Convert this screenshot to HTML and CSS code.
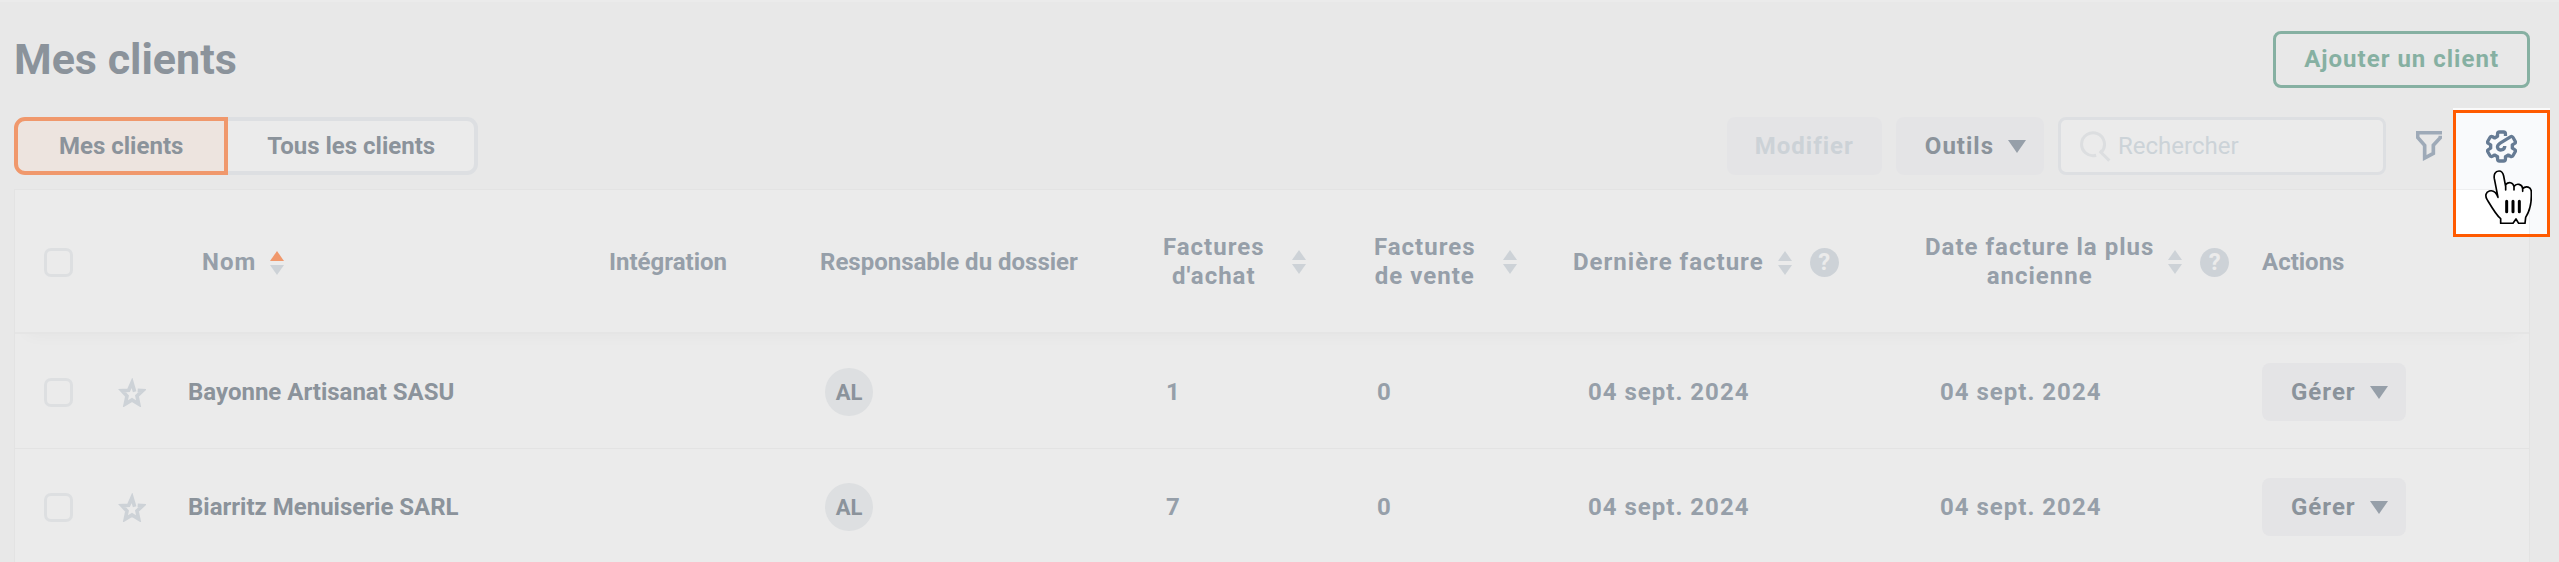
FILE: index.html
```html
<!DOCTYPE html>
<html lang="fr">
<head>
<meta charset="utf-8">
<title>Mes clients</title>
<link rel="stylesheet" href="styles.css">
</head>
<body>
<svg class="sprite" aria-hidden="true">
  <symbol id="sort" viewBox="0 0 14 24"><path class="sort-up" d="M7 0L14 10H0Z"/><path class="sort-down" d="M0 14H14L7 24Z"/></symbol>
  <symbol id="star" viewBox="0 0 84 87"><path d="M50 41L42 14L32 37L12 38L27 54L22 78L42 66L62 78L57 54L74 38L59 37" fill="none" stroke="currentColor" stroke-width="11"/></symbol>
  <symbol id="caret" viewBox="0 0 18 13"><path d="M0 0H18L9 13Z" fill="currentColor"/></symbol>
</svg>
<main class="page">
  <header class="page-header">
    <h1 class="title">Mes clients</h1>
    <button class="btn btn-outline" type="button">Ajouter un client</button>
  </header>

  <div class="toolbar">
    <div class="tabs">
      <button class="tab tab-active" type="button" aria-pressed="true">Mes clients</button>
      <button class="tab" type="button" aria-pressed="false">Tous les clients</button>
    </div>
    <div class="tools">
      <button class="btn" type="button" disabled>Modifier</button>
      <button class="btn btn-menu" type="button">Outils<svg class="caret"><use href="#caret"/></svg></button>
      <label class="search">
        <svg class="search-icon" viewBox="0 0 92 92" aria-hidden="true"><path d="M48 72A34 34 0 1 1 64 62L59 60L87 88" fill="none" stroke="currentColor" stroke-width="9"/></svg>
        <input class="search-input" type="text" placeholder="Rechercher" aria-label="Rechercher">
      </label>
      <button class="icon-btn" type="button" aria-label="Filtrer">
        <svg class="filter-icon" viewBox="0 0 78 90"><path d="M78 5H5V19L26 43V81L52 67V43L73 20V14" fill="none" stroke="currentColor" stroke-width="11"/></svg>
      </button>
      <div class="settings">
        <div class="spotlight"><div class="spotlight-card"></div></div>
        <button class="icon-btn icon-btn-strong" type="button" aria-label="Paramètres">
          <svg class="gear-icon" viewBox="0 0 94 99"><path d="M59 18V11.5Q59 5.5 53 5.5H41Q35 5.5 35 11.5V18.5L26.2 23.6L20.1 20.1Q14.9 17.1 11.9 22.3L5.9 32.7Q2.9 37.9 8.1 40.9L14.2 44.4V54.6L8.1 58.1Q2.9 61.1 5.9 66.3L11.9 76.7Q14.9 81.9 20.1 78.9L26.2 75.4L35 80.5V87.5Q35 93.5 41 93.5H53Q59 93.5 59 87.5V80.5L67.8 75.4L73.9 78.9Q79.1 81.9 82.1 76.7L88.1 66.3Q91.1 61.1 85.9 58.1L79.8 54.6V44.4L85.9 40.9Q91.1 37.9 88.1 32.7L82.1 22.3Q79.1 17.1 73.9 20.1L43 39C29 48 35 61 47 60Q57 58 57 48" fill="none" stroke="currentColor" stroke-width="10" stroke-linejoin="round"/></svg>
        </button>
        <svg class="pointer" viewBox="0 0 141 162" aria-hidden="true"><path d="M42 3C30 3 26 14 28 26L39 82C34 68 24 60 13 63C2 66 0 78 6 88C18 108 34 136 47 146V160H84L93 147L101 160H120L122 142C136 120 139 100 139 78V66C139 50 122 46 113 56V64V56C112 42 94 38 87 50V60V50C84 36 70 35 62 44V60V50L56 18C54 8 50 3 42 3Z" fill="#fff" stroke="#000" stroke-width="5" stroke-linejoin="round"/><path d="M65 94V125M84 94V125M103 94V125" stroke="#000" stroke-width="9" stroke-linecap="round"/></svg>
      </div>
    </div>
  </div>

  <table class="clients">
    <colgroup>
      <col class="c-check"><col class="c-star"><col class="c-name"><col class="c-integ"><col class="c-owner">
      <col class="c-count"><col class="c-sale"><col class="c-last"><col class="c-oldest"><col class="c-actions">
    </colgroup>
    <thead>
      <tr>
        <th class="cell-check"><input class="check" type="checkbox" aria-label="Tout sélectionner"></th>
        <th></th>
        <th class="head-name"><span class="head spaced">Nom<svg class="sort sort-asc"><use href="#sort"/></svg></span></th>
        <th>Intégration</th>
        <th>Responsable du dossier</th>
        <th><span class="head head-wide spaced"><span class="head-text">Factures<br>d'achat</span><svg class="sort"><use href="#sort"/></svg></span></th>
        <th><span class="head head-wide spaced"><span class="head-text">Factures<br>de vente</span><svg class="sort"><use href="#sort"/></svg></span></th>
        <th><span class="head spaced">Dernière facture<svg class="sort"><use href="#sort"/></svg><span class="help">?</span></span></th>
        <th><span class="head spaced"><span class="head-text">Date facture la plus<br>ancienne</span><svg class="sort"><use href="#sort"/></svg><span class="help">?</span></span></th>
        <th>Actions</th>
      </tr>
    </thead>
    <tbody>
      <tr>
        <td class="cell-check"><input class="check" type="checkbox" aria-label="Bayonne Artisanat SASU"></td>
        <td><button class="star-btn" type="button" aria-label="Favori"><svg class="star"><use href="#star"/></svg></button></td>
        <td class="name">Bayonne Artisanat SASU</td>
        <td></td>
        <td class="owner"><span class="avatar">AL</span></td>
        <td class="count spaced">1</td>
        <td class="count spaced">0</td>
        <td class="date spaced">04 sept. 2024</td>
        <td class="date spaced">04 sept. 2024</td>
        <td><button class="btn btn-menu" type="button">Gérer<svg class="caret"><use href="#caret"/></svg></button></td>
      </tr>
      <tr>
        <td class="cell-check"><input class="check" type="checkbox" aria-label="Biarritz Menuiserie SARL"></td>
        <td><button class="star-btn" type="button" aria-label="Favori"><svg class="star"><use href="#star"/></svg></button></td>
        <td class="name">Biarritz Menuiserie SARL</td>
        <td></td>
        <td class="owner"><span class="avatar">AL</span></td>
        <td class="count spaced">7</td>
        <td class="count spaced">0</td>
        <td class="date spaced">04 sept. 2024</td>
        <td class="date spaced">04 sept. 2024</td>
        <td><button class="btn btn-menu" type="button">Gérer<svg class="caret"><use href="#caret"/></svg></button></td>
      </tr>
    </tbody>
  </table>
</main>
</body>
</html>
```

FILE: styles.css
```css
* { box-sizing: border-box; }

body {
  margin: 0;
  overflow: hidden;
  background: #e8e8e8;
  color: #8b939b;
  font: 700 24px/29px Roboto, "Liberation Sans", sans-serif;
}

button, input { font: inherit; color: inherit; margin: 0; }
button { padding: 0; border: 0; background: none; }
svg { display: block; flex: none; }

.sprite { position: absolute; width: 0; height: 0; }

.page {
  padding: 29px 29px 0 14px;
  border-top: 2px solid #ebebeb;
}

.page-header, .toolbar, .tools, .tabs {
  display: flex;
  align-items: center;
}
.page-header, .toolbar { justify-content: space-between; }
.page-header { margin-bottom: 29px; }
.toolbar { margin-bottom: 14px; }
.tools { gap: 14px; }

.title { margin: 0; font-size: 43px; line-height: 57px; }

.btn {
  display: inline-flex;
  align-items: center;
  height: 58px;
  padding: 0 28px;
  border-radius: 8px;
  background: #e4e4e6;
  letter-spacing: 1px;
  white-space: nowrap;
}
.btn:disabled { color: #ccd2d7; }
.btn-menu { gap: 14px; padding: 0 18px 0 29px; }
.btn-outline {
  height: 57px;
  border: 3px solid #86b0a2;
  background: none;
  color: #86b0a2;
}
.caret { width: 18px; height: 13px; color: #969fa9; }

.tab {
  height: 58px;
  padding: 0 39px;
  border: 4px solid #dddfe2;
  border-left: 0;
  border-radius: 0 11px 11px 0;
  background: #ebebeb;
}
.tab-active {
  padding: 0 41px;
  border: 4px solid #f0986c;
  border-radius: 11px 0 0 11px;
  background: #ede4df;
}

.search {
  display: flex;
  align-items: center;
  gap: 7px;
  width: 328px;
  height: 58px;
  padding: 0 19px;
  border: 3px solid #dddfe2;
  border-radius: 8px;
  background: #ebebeb;
}
.search-icon { width: 31px; height: 31px; color: #dcdee0; }
.search-input {
  flex: 1;
  min-width: 0;
  padding: 0;
  border: 0;
  background: none;
  font-weight: 400;
}
.search-input::placeholder { color: #ccd3d8; opacity: 1; }

.icon-btn {
  display: flex;
  align-items: center;
  justify-content: center;
  width: 58px;
  height: 58px;
  color: #9eaab8;
}
.icon-btn-strong { position: relative; color: #667b94; }
.filter-icon { width: 26px; height: 30px; }
.gear-icon { width: 31px; height: 33px; }

.settings { position: relative; }
.spotlight {
  position: absolute;
  top: -7px;
  left: -19px;
  display: flex;
  align-items: flex-end;
  width: 97px;
  height: 127px;
  border: 3px solid #ff5a00;
  background: #f9fafc;
  box-shadow: 0 -2px 0 #fafafa;
}
.spotlight-card {
  width: 74px;
  height: 45px;
  border: 1px solid #eeeff1;
  border-width: 1px 1px 0 0;
  background: #fff;
}
.pointer {
  position: absolute;
  top: 53px;
  left: 13px;
  width: 47px;
  height: 54px;
}

.clients {
  width: 100%;
  table-layout: fixed;
  border-collapse: separate;
  border-spacing: 0;
  border: 1px solid #e3e3e3;
  background: #ebebeb;
  color: #969fa9;
}
.c-check { width: 88px; }
.c-star { width: 70px; }
.c-name { width: 421px; }
.c-integ { width: 211px; }
.c-owner { width: 343px; }
.c-count { width: 211px; }
.c-sale { width: 199px; }
.c-last { width: 352px; }
.c-oldest { width: 337px; }
.c-actions { width: 282px; }

.clients thead tr { box-shadow: 0 12px 16px -12px rgba(0, 0, 0, 0.04); }
.clients th {
  height: 144px;
  padding: 2px 0 0 15px;
  border-bottom: 2px solid #e5e5e5;
  text-align: left;
  font-weight: 700;
  white-space: nowrap;
}
.clients td {
  height: 115px;
  padding: 2px 0 0 15px;
  border-bottom: 1px solid #e3e3e3;
  white-space: nowrap;
}
.clients .cell-check { padding-left: 29px; }
.clients .head-name { padding-left: 29px; }
.clients .owner { padding-left: 20px; }
.clients .count { padding-left: 18px; }
.clients .date { padding-left: 30px; }
.clients .name { color: #8b939b; }
.clients .btn { color: #8b939b; }
.spaced { letter-spacing: 1px; }

.head { display: inline-flex; align-items: center; gap: 14px; vertical-align: middle; }
.head-wide { gap: 27px; }
.head-text { text-align: center; }

.sort { width: 14px; height: 24px; fill: #cdd2d7; --up: #cdd2d7; }
.sort-asc { --up: #f0986c; }
.sort-up { fill: var(--up); }

.help {
  width: 29px;
  height: 29px;
  margin-left: 4px;
  border-radius: 50%;
  background: #cdd2d7;
  color: #ebebeb;
  text-align: center;
  letter-spacing: 0;
}

.check {
  display: block;
  appearance: none;
  width: 29px;
  height: 29px;
  border: 3px solid #dddfe1;
  border-radius: 7px;
}
.star-btn { display: block; }
.star { width: 28px; height: 29px; color: #cdd2d7; }

.avatar {
  display: flex;
  align-items: center;
  justify-content: center;
  width: 48px;
  height: 48px;
  border-radius: 50%;
  background: #dddfe1;
  color: #8b939b;
  font-size: 22px;
}
```
